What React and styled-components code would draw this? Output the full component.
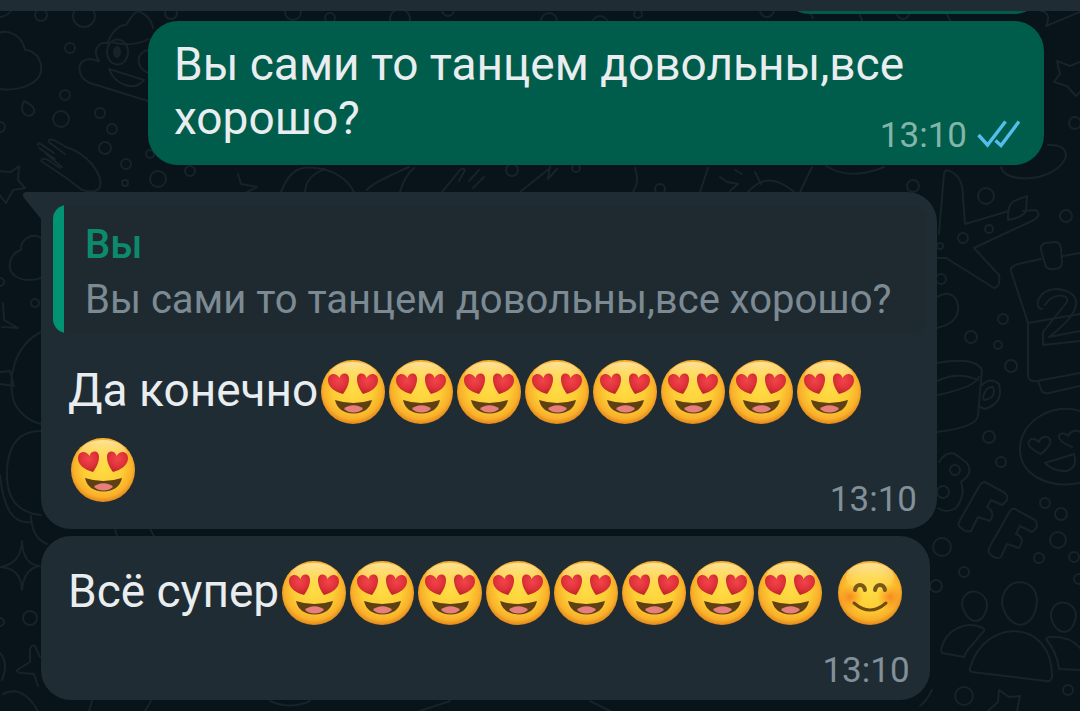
import React from "react";
import styled, { createGlobalStyle } from "styled-components";

const GlobalStyle = createGlobalStyle`
  * { box-sizing: border-box; }
  body { margin: 0; background: #08131a; }
`;

const Page = styled.div`
  position: relative;
  min-height: 100vh;
  overflow: hidden;
  background: #08131a;
  font-family: Roboto, "Noto Sans", sans-serif;
  color: #e9edef;
`;

const Header = styled.header`
  position: relative;
  height: 11px;
  background: #1f2c34;
`;

const WallpaperArt = styled.svg`
  position: absolute;
  inset: 0;
  width: 100%;
  height: 100%;
  fill: none;
  stroke: #172329;
  stroke-width: 2;
  stroke-linecap: round;
  stroke-linejoin: round;
`;

const Defs = styled.svg`
  position: absolute;
  width: 0;
  height: 0;
`;

const Chat = styled.main`
  position: relative;
  display: flex;
  flex-direction: column;
  align-items: flex-start;
  padding: 0 36px 10px 41px;
  overflow: hidden;
`;

const Bubble = styled.article`
  position: relative;
  display: grid;
  max-width: 896px;
  padding: ${(p) => (p.$quoted ? "13px 0 8px" : "16px 0 8px")};
  margin-top: ${(p) => (p.$first ? "27px" : "7px")};
  border-radius: ${(p) => (p.$first ? "0 30px 30px 30px" : "30px")};
  background: ${(p) => (p.$out ? "#005d4b" : "#1f2c34")};
  align-self: ${(p) => (p.$out ? "flex-end" : "flex-start")};
`;

const PreviousBubble = styled(Bubble)`
  width: 264px;
  height: 60px;
  margin-top: -57px;
`;

const Text = styled.p`
  grid-area: ${(p) => (p.$row || 1)} / 1;
  margin: ${(p) => (p.$quoted ? "18px 0 14px" : "0 0 12px")};
  padding: 0 ${(p) => (p.$emoji ? "27px" : "26px")};
  font-size: 46px;
  line-height: ${(p) => (p.$emoji ? "78px" : "54px")};
`;

const Meta = styled.div`
  grid-area: ${(p) => (p.$row || 1)} / 1;
  display: flex;
  align-items: center;
  align-self: end;
  justify-self: end;
  gap: 10px;
  margin-top: ${(p) => (p.$below ? "8px" : "0")};
  padding-right: ${(p) => (p.$out ? "24px" : "20px")};
  font-size: 35px;
  line-height: 42px;
  color: ${(p) => (p.$out ? "#84b5a9" : "#82909a")};
`;

const Quote = styled.blockquote`
  grid-area: 1 / 1;
  margin: 0 10px 0 12px;
  padding: 12px 19px 6px 32px;
  border-radius: 14px;
  background: linear-gradient(to right, #029472 11px, #1f2a30 11px);
  font-size: 40px;
  line-height: 55px;
  color: #7c8a94;
`;

const QuoteAuthor = styled.cite`
  display: block;
  font-style: normal;
  font-weight: 500;
  color: #0d8a6c;
`;

const QuoteText = styled.span`
  display: block;
`;

const Tail = styled.svg`
  position: absolute;
  top: 0;
  left: -19px;
  width: 20px;
  height: 28px;
  fill: #1f2c34;
`;

const EmojiArt = styled.svg`
  width: 64px;
  height: 64px;
  margin: 0 1px 0 3px;
  vertical-align: -18px;
`;

const Ticks = styled.svg`
  width: 43px;
  height: 32px;
  fill: none;
  stroke: #53bdeb;
  stroke-width: 3.4;
`;

const dots = [
  [41, 15, 6], [84, 16, 11], [70, 48, 5], [65, 95, 5], [61, 119, 8], [100, 113, 5],
  [112, 129, 5], [105, 148, 6], [126, 164, 5], [158, 179, 8], [190, 171, 5], [125, 183, 3],
  [171, 13, 6], [293, 12, 8], [330, 18, 5], [400, 19, 10], [448, 10, 6], [549, 21, 8],
  [600, 24, 8], [638, 14, 4], [767, 10, 7], [903, 13, 6], [512, 170, 6], [576, 168, 4],
  [660, 189, 5], [150, 154, 4], [913, 186, 6], [986, 196, 8], [1066, 216, 6], [989, 229, 4],
  [963, 238, 5], [940, 246, 3], [941, 279, 5], [1075, 123, 6], [1003, 319, 5], [971, 337, 6],
  [998, 345, 4], [1011, 366, 6], [989, 437, 6], [1001, 462, 5], [1045, 503, 5], [1061, 514, 6],
  [1058, 540, 8], [1039, 558, 5], [1074, 557, 5], [942, 547, 9], [964, 572, 5], [936, 586, 6],
  [1079, 579, 5], [964, 696, 9], [1068, 690, 5], [955, 470, 5], [943, 492, 6],
  [0, 127, 5], [35, 303, 4], [0, 282, 4], [30, 618, 7], [0, 622, 4],
];

const outlines = [
  // Clouds, drops and the smiling figure in the top left corner
  "M-4 34C8 28 22 35 25 50C38 51 44 64 40 75C33 88 10 92-4 88",
  "M0 17Q7 16 11 11M24 101C18 113 28 119 33 114C37 108 30 104 24 101Z",
  "M148 101L90 83C80 79 76 67 83 61C89 57 97 61 99 61C92 51 98 41 108 43C110 34 118 25 126 25Q134 12 138 11Q151 16 153 28M111 42C126 46 141 44 148 39",
  "M128 52A10 12 0 1 1 107 52A10 12 0 1 1 128 52M148 50C137 52 134 66 148 73M109 69L144 80C134 92 115 85 109 69Z",
  // Hand and star
  "M38 145Q37 142 41 144L54 153M54 153L43 146M65 154L50 143Q46 138 54 140L66 147C88 154 103 174 100 187Q96 194 82 190L65 177L41 161Q42 157 48 160L60 168M62 167L45 153M39 148L55 159",
  "M-2 171L11 172L19 166L18 180L25 188L13 190L6 203L-2 193",
  // Shapes between the first two bubbles
  "M238 174L241 184L257 187L247 192M281 192C290 168 302 166 316 168C335 170 348 180 354 192M305 192C306 179 314 173 325 169M367 190Q370 184 409 167M400 192Q405 175 414 168M442 192L456 175Q462 166 465 170L459 181M469 181L479 170M473 188L484 177M520 192L550 168M550 166L548 179L557 169M635 168Q640 181 633 192M700 192L708 168",
  "M720 177L727 182L738 184L730 191M748 192Q768 169 794 192M800 192L812 167M826 166Q850 181 884 167M755 172L761 184M735 170L742 174",
  // Top edge and right star
  "M809 11L813 18M858 11L862 20M946 12L951 22M1041 11Q1052 13 1046 26L1080 12",
  "M1080 62L1070 66L1057 61L1060 74L1054 82L1067 86L1076 96L1080 92M1001 167C1005 185 1058 182 1066 156Q1066 144 1048 145",
  // Aeroplane
  "M939 234L944 174Q945 168 952 172Q963 178 963 197L965 224L1009 211M1023 211L1036 210Q1042 214 1034 220L974 248L999 275Q1001 287 994 288L946 258L937 258",
  "M1008 220Q1007 205 1014 201L1027 196L1026 211Q1022 218 1008 220Z",
  // Calendar
  "M1041 259L1018 264Q1008 267 1012 274L1028 323V376Q1029 382 1037 381L1080 373M1028 323L1080 314M1063 256L1080 253",
  "M1045 243L1056 242Q1060 242 1061 249L1062 262Q1062 269 1054 269Q1046 270 1045 264L1041 250Q1040 245 1045 243Z",
  "M1042 309C1034 309 1036 289 1058 289C1085 293 1082 312 1049 337L1080 331M1045 305C1053 292 1070 294 1067 302L1043 332V345L1080 341M1038 381L1041 389Q1042 394 1049 393L1080 386",
  // Heart, cup and heart-eyed face
  "M937 297Q951 289 957 301Q963 322 937 328M937 363Q975 356 982 370L978 415Q978 427 937 432M937 381Q958 371 978 380M938 395Q975 387 979 377M981 386Q990 376 999 384Q1004 403 985 409L980 407M983 398Q985 386 993 387Q997 398 984 400Z",
  "M1080 411C1055 402 1020 420 1020 449C1020 475 1048 489 1080 483",
  "M1041 454Q1024 446 1030 440Q1034 437 1039 442Q1042 434 1049 438Q1054 443 1041 454ZM1072 447Q1057 441 1059 435Q1064 431 1068 436Q1073 428 1080 432M1045 463L1074 454Q1078 467 1067 471Q1054 472 1045 463Z",
  // BFF lettering shapes
  "M939 462Q946 451 955 454L967 463Q974 473 961 482Q966 495 956 508Q946 514 938 508",
  "M985 482L1005 493Q1011 499 1002 505L991 500L987 507Q996 512 990 521L978 517L971 531Q966 533 960 527Q957 526 960 520L980 485Q982 482 985 482Z",
  "M1015 509L1035 520Q1040 527 1032 532L1020 526L1016 534Q1026 538 1019 548L1007 544L1001 557Q996 560 990 554Q987 552 990 546L1010 511Q1012 508 1015 509Z",
  // Group of people
  "M1002 604C1002 575 1037 576 1037 601C1035 631 1009 633 1002 604ZM962 605C962 586 987 588 987 606C984 627 967 625 962 605ZM1051 617C1050 597 1076 599 1076 616C1073 638 1055 636 1051 617Z",
  "M970 668C984 617 1053 618 1052 677Q1051 682 1046 681L972 672Q969 671 970 668ZM941 650C945 629 967 620 983 628Q986 630 982 633L967 651L964 657L942 653ZM1080 670L1059 669Q1057 652 1046 639Q1048 636 1056 637Q1070 637 1080 648",
  "M988 711L998 702L999 690L1009 697L1020 696L1017 711M932 690Q926 702 920 706",
  // Left edge
  "M41 238C33 232 20 239 21 250C9 254 6 269 15 276Q26 283 41 278M3 303L4 320L18 328L2 327M41 332C14 346 7 378 14 402Q22 419 41 424M0 372L10 371L14 386L0 384",
  "M41 431C16 431 6 449 7 478C8 502 21 513 41 515M0 475Q5 526 31 522M31 516Q32 538 47 544M22 541Q23 565 40 566Q24 568 22 590Q21 568 0 567Q21 564 22 541Z",
  "M40 657L35 646Q31 644 30 650V662L17 670Q17 673 22 673L34 674L38 686M0 653Q9 663 2 680M3 694Q22 684 38 711M115 529L117 536M150 529L154 536M92 701L89 711M151 701L145 711M270 701Q290 710 310 701M420 711L450 701M590 701L610 711",
];

const Wallpaper = () => (
  <WallpaperArt viewBox="0 0 1080 711" preserveAspectRatio="xMinYMin slice" aria-hidden="true">
    {outlines.map((d) => <path key={d} d={d} />)}
    {dots.map(([x, y, r]) => <circle key={`${x}-${y}`} cx={x} cy={y} r={r} />)}
    <ellipse cx="117" cy="52" rx="3" ry="5" fill="#172329" />
  </WallpaperArt>
);

const EmojiDefs = () => (
  <Defs aria-hidden="true">
    <defs>
      <radialGradient id="face" cx="50%" cy="46%" r="56%">
        <stop offset="0" stopColor="#ffdc45" />
        <stop offset=".55" stopColor="#fdcd35" />
        <stop offset=".82" stopColor="#f9b02a" />
        <stop offset="1" stopColor="#dc7c18" />
      </radialGradient>
      <linearGradient id="shine" x1="0" y1="0" x2="0" y2="1">
        <stop offset="0" stopColor="#fff0c0" stopOpacity=".75" />
        <stop offset="1" stopColor="#ffe36b" stopOpacity="0" />
      </linearGradient>
      <radialGradient id="heart" cx="50%" cy="35%" r="65%">
        <stop offset="0" stopColor="#f0444b" />
        <stop offset=".6" stopColor="#e03139" />
        <stop offset="1" stopColor="#b9262a" />
      </radialGradient>
      <radialGradient id="blush">
        <stop offset="0" stopColor="#f5791c" stopOpacity=".8" />
        <stop offset="1" stopColor="#fb8a18" stopOpacity="0" />
      </radialGradient>
    </defs>
  </Defs>
);

const Face = ({ label, children }) => (
  <EmojiArt viewBox="0 0 64 64" role="img" aria-label={label}>
    <circle cx="32" cy="32" r="32" fill="url(#face)" />
    <ellipse cx="32" cy="16" rx="24" ry="14" fill="url(#shine)" />
    {children}
  </EmojiArt>
);

const HeartEyes = () => (
  <Face label="😍">
    <path d="M22 34C14 32 7 27 7 20.500C7 13 15 12 18.500 18C20 12 28 12 28 19C28 25 25 30 22 34Z" fill="url(#heart)" />
    <path d="M42 34C39 30 36 25 36 19C36 12 44 12 45.500 18C49 12 57 13 57 20.500C57 27 50 32 42 34Z" fill="url(#heart)" />
    <path d="M14 40Q32 46 51 40Q48 53 32.500 53.500Q17 53 14 40Z" fill="#5e4012" />
    <path d="M23 49C27 44 38 44 42 49Q38 52.500 32.500 52.500Q27 52.500 23 49Z" fill="#e77f7c" />
  </Face>
);

const Blushing = () => (
  <Face label="😊">
    <circle cx="12" cy="36" r="13" fill="url(#blush)" />
    <circle cx="52" cy="36" r="13" fill="url(#blush)" />
    <path d="M17 29Q18 24 22 24Q26 24 27 29M37 29Q38 24 42 24Q46 24 47 29" fill="none" stroke="#77581c" strokeWidth="4" strokeLinecap="round" />
    <path d="M16 42Q32 56 48 42" fill="none" stroke="#704c10" strokeWidth="3" strokeLinecap="round" />
  </Face>
);

const hearts = (count) =>
  Array.from({ length: count }, (_, i) => <HeartEyes key={i} />);

export default function App() {
  return (
    <Page>
      <GlobalStyle />
      <EmojiDefs />
      <Wallpaper />
      <Header />
      <Chat>
        <PreviousBubble $out aria-hidden="true" />
        <Bubble $out>
          <Text>Вы сами то танцем довольны,все хорошо?</Text>
          <Meta $out>
            <time>13:10</time>
            <Ticks viewBox="0 0 43 32" role="img" aria-label="Прочитано">
              <path d="M1.500 15L10.500 25L28.500 1.500M18.500 20.500L24 25.500L42 1.500" />
            </Ticks>
          </Meta>
        </Bubble>
        <Bubble $first $quoted>
          <Tail viewBox="0 0 20 28" aria-hidden="true">
            <path d="M20 0H4Q-1 1 2 6L19 27H20Z" />
          </Tail>
          <Quote>
            <QuoteAuthor>Вы</QuoteAuthor>
            <QuoteText>Вы сами то танцем довольны,все хорошо?</QuoteText>
          </Quote>
          <Text $quoted $emoji $row={2}>Да конечно{hearts(9)}</Text>
          <Meta $row={2}><time>13:10</time></Meta>
        </Bubble>
        <Bubble>
          <Text $emoji>Всё супер{hearts(8)} <Blushing /></Text>
          <Meta $row={2} $below><time>13:10</time></Meta>
        </Bubble>
      </Chat>
    </Page>
  );
}
